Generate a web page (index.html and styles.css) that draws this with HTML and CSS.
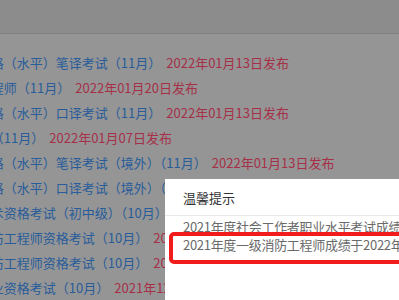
FILE: index.html
```html
<!DOCTYPE html>
<html lang="zh-CN">
<head>
<meta charset="utf-8">
<title>成绩发布</title>
<link rel="stylesheet" href="styles.css">
</head>
<body>
<div class="page">
  <div class="topbar"></div>
  <ul class="list">
    <li class="item"><a class="title">2021年度翻译专业资格（水平）笔译考试（11月）</a><span class="date">2022年01月13日发布</span></li>
    <li class="item"><a class="title">2021年度一级造价工程师（11月）</a><span class="date">2022年01月20日发布</span></li>
    <li class="item"><a class="title">2021年度翻译专业资格（水平）口译考试（11月）</a><span class="date">2022年01月13日发布</span></li>
    <li class="item"><a class="title">2021年度高级经济师（11月）</a><span class="date">2022年01月07日发布</span></li>
    <li class="item"><a class="title">2021年度翻译专业资格（水平）笔译考试（境外）（11月）</a><span class="date">2022年01月13日发布</span></li>
    <li class="item"><a class="title">2021年度翻译专业资格（水平）口译考试（境外）（11月）</a><span class="date">2022年01月13日发布</span></li>
    <li class="item"><a class="title">2021年度经济专业技术资格考试（初中级）（10月）</a><span class="date">2022年01月10日发布</span></li>
    <li class="item"><a class="title">2021年度一级注册消防工程师资格考试（10月）</a><span class="date">2022年01月06日发布</span></li>
    <li class="item"><a class="title">2021年度二级注册消防工程师资格考试（10月）</a><span class="date">2022年01月06日发布</span></li>
    <li class="item"><a class="title">2021年度执业药师职业资格考试（10月）</a><span class="date">2021年12月30日发布</span></li>
  </ul>
</div>
<div class="dialog">
  <div class="dialog-head">温馨提示</div>
  <div class="dialog-body">
    <p class="line">2021年度社会工作者职业水平考试成绩于2022年01月13日发布</p>
    <p class="line">2021年度一级消防工程师成绩于2022年01月06日发布</p>
  </div>
  <div class="highlight"></div>
</div>
</body>
</html>
```

FILE: styles.css
```css
html, body {
  margin: 0;
  padding: 0;
  width: 399px;
  height: 300px;
  overflow: hidden;
  background: #959595;
  font-family: "Noto Sans CJK SC", "Liberation Sans", sans-serif;
  font-size: 13px;
}

.page {
  display: flex;
  flex-direction: column;
}

.topbar {
  height: 33px;
  background: #8c8c8c;
  border-bottom: 1px solid #808080;
}

.list {
  list-style: none;
  margin: 16px 0 0 -129px;
  padding: 0;
}

.item {
  display: flex;
  height: 25px;
  line-height: 25px;
  white-space: nowrap;
}

.title {
  color: #285c9a;
}

.date {
  margin-left: 5px;
  color: #a63048;
}

.dialog {
  position: fixed;
  left: 165px;
  top: 179px;
  width: 420px;
  height: 200px;
  background: #ffffff;
}

.dialog-head {
  height: 36px;
  line-height: 37px;
  padding-left: 18px;
  color: #333333;
  border-bottom: 1px solid #e9e9e9;
}

.dialog-body {
  padding: 2px 0 0 18px;
}

.line {
  margin: 0;
  height: 18px;
  line-height: 18px;
  color: #6a6a6a;
  letter-spacing: -0.3px;
  white-space: nowrap;
}

.highlight {
  position: absolute;
  left: 4px;
  top: 53px;
  width: 260px;
  height: 24px;
  border: 4px solid #f21c1c;
  border-radius: 5px;
}
```
